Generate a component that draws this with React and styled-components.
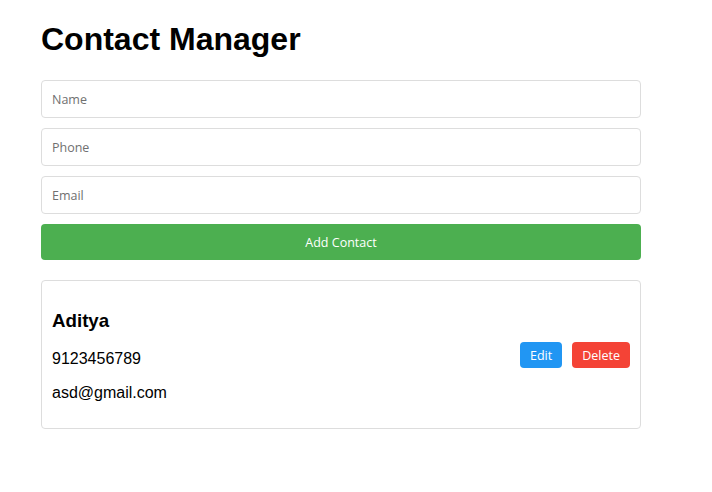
import React, { useState } from "react";
import styled, { createGlobalStyle } from "styled-components";

const Global = createGlobalStyle`
  body {
    margin: 0;
    background: #fff;
    font-family: "Liberation Sans", Arial, sans-serif;
    color: #000;
  }
`;

const Page = styled.div`
  width: 600px;
  padding: 0 41px;
  box-sizing: content-box;
`;

const Title = styled.h1`
  font-size: 32px;
  font-weight: bold;
  margin: 21.44px 0;
`;

const Form = styled.div`
  display: flex;
  flex-direction: column;
  gap: 10px;
  margin-bottom: 20px;
`;

const Input = styled.input`
  box-sizing: border-box;
  width: 100%;
  height: 38px;
  padding: 11px 10px 9px;
  border: 1px solid #ddd;
  border-radius: 4px;
  font-family: "Open Sans", sans-serif;
  font-size: 12.5px;
  line-height: 16px;
  outline: none;
  &::placeholder { color: #707070; }
`;

const AddButton = styled.button`
  height: 36px;
  padding: 2px 0 0;
  border: none;
  border-radius: 4px;
  background: #4caf50;
  color: #fff;
  font-family: "Open Sans", sans-serif;
  font-size: 12.5px;
  cursor: pointer;
`;

const Card = styled.div`
  display: flex;
  justify-content: space-between;
  align-items: center;
  padding: 10px;
  border: 1px solid #ddd;
  border-radius: 4px;
`;

const Info = styled.div``;

const Name = styled.h3`
  font-size: 18.72px;
  margin: 18.72px 0;
`;

const Line = styled.p`
  font-size: 16px;
  margin: 16px 0;
`;

const Actions = styled.div`
  display: flex;
  gap: 10px;
`;

const SmallButton = styled.button`
  height: 26px;
  padding: 1px 10px 0;
  border: none;
  border-radius: 4px;
  background: ${(p) => (p.$danger ? "#f44336" : "#2196f3")};
  color: #fff;
  font-family: "Open Sans", sans-serif;
  font-size: 12.5px;
  cursor: pointer;
`;

export default function App() {
  const [contacts] = useState([
    { name: "Aditya", phone: "9123456789", email: "asd@gmail.com" },
  ]);
  return (
    <>
      <Global />
      <Page>
        <Title>Contact Manager</Title>
        <Form>
          <Input placeholder="Name" />
          <Input placeholder="Phone" />
          <Input placeholder="Email" />
          <AddButton>Add Contact</AddButton>
        </Form>
        {contacts.map((c) => (
          <Card key={c.phone}>
            <Info>
              <Name>{c.name}</Name>
              <Line>{c.phone}</Line>
              <Line>{c.email}</Line>
            </Info>
            <Actions>
              <SmallButton>Edit</SmallButton>
              <SmallButton $danger>Delete</SmallButton>
            </Actions>
          </Card>
        ))}
      </Page>
    </>
  );
}
